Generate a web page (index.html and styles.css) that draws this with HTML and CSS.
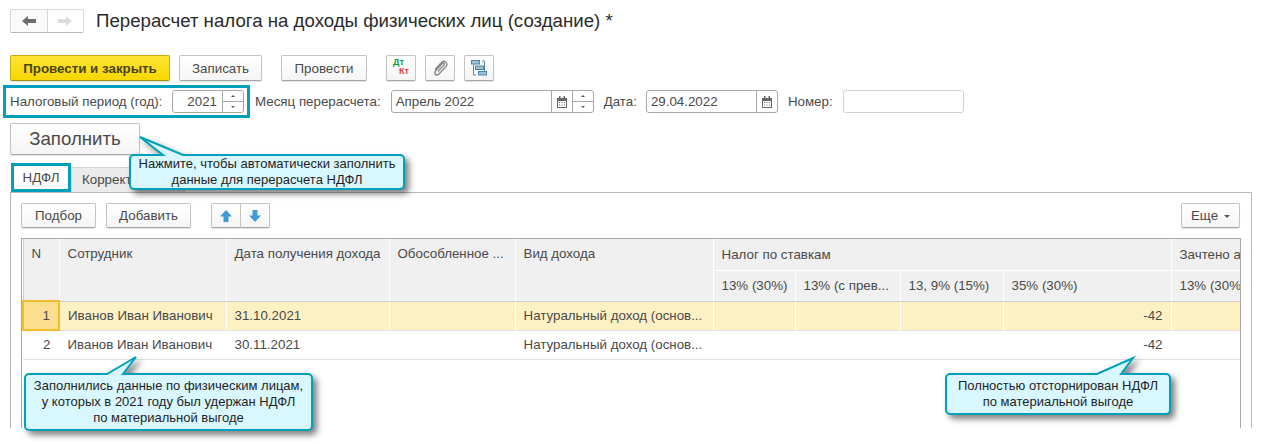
FILE: index.html
```html
<!DOCTYPE html>
<html lang="ru">
<head>
  <meta charset="UTF-8" />
  <title>Перерасчет НДФЛ</title>
  <link rel="stylesheet" href="styles.css">
</head>
<body>
  <div class="page">
    <div class="head">
      <div class="nav">
        <button class="nav-btn">
          <svg width="16" height="12" viewBox="0 0 16 12"><path d="M1 6 7 1v3h8v4H7v3z" fill="#6e6e6e"/></svg>
        </button>
        <button class="nav-btn">
          <svg width="16" height="12" viewBox="0 0 16 12"><path d="M15 6 9 1v3H1v4h8v3z" fill="#dcdcdc"/></svg>
        </button>
      </div>
      <h1>Перерасчет налога на доходы физических лиц (создание) *</h1>
    </div>

    <div class="toolbar">
      <button class="btn btn-main">Провести и закрыть</button>
      <button class="btn btn-write">Записать</button>
      <button class="btn btn-post">Провести</button>
      <button class="btn btn-icon btn-dtkt"><span class="dt">Дт</span><span class="kt">Кт</span></button>
      <button class="btn btn-icon">
        <svg width="17" height="17" viewBox="0 0 17 17" fill="none" stroke="#8a8a8a" stroke-width="1.4"><path d="M6 11.500 12 5C13 3.800 11.500 2.400 10.300 3.600L3.500 11C1.500 13.500 4.500 16.500 7 14L14 6.500C16.500 3.500 12.500-.5 9.500 2.500L3 9.500"/></svg>
      </button>
      <button class="btn btn-icon">
        <svg width="16" height="16" viewBox="0 0 16 16" fill="none" stroke="#4f86ab"><path d="M2.500 4.500V15H5M13.500 11V1H11"/><rect x=".5" y=".5" width="8" height="3.500" fill="#9cc0da"/><rect x="4.500" y="6" width="8" height="3.500" fill="#9cc0da"/><rect x="7.500" y="11.500" width="8" height="3.500" fill="#9cc0da"/></svg>
      </button>
    </div>

    <div class="filters">
      <div class="mark-box period">
        <span class="lbl">Налоговый период (год):</span>
        <div class="field field-year">
          <span class="val val-right">2021</span>
          <span class="spin"><i class="up"></i><i class="down"></i></span>
        </div>
      </div>
      <span class="lbl lbl-month">Месяц перерасчета:</span>
      <div class="field field-month">
        <span class="val">Апрель 2022</span>
        <span class="cal"><svg width="12" height="12" viewBox="0 0 12 12"><path d="M1 2h10v10H1z" fill="#666"/><path d="M3 0h1.500v3H3zM7.500 0H9v3H7.500z" fill="#666"/><path d="M2 5h8v6H2z" fill="#fff"/><path d="M3 6h1v1H3zm2.500 0h1v1h-1zM8 6h1v1H8zM3 8.500h1v1H3zm2.500 0h1v1h-1zm2.500 0h1v1H8z" fill="#666"/></svg></span>
        <span class="spin"><i class="up"></i><i class="down"></i></span>
      </div>
      <span class="lbl lbl-date">Дата:</span>
      <div class="field field-date">
        <span class="val">29.04.2022</span>
        <span class="cal"><svg width="12" height="12" viewBox="0 0 12 12"><path d="M1 2h10v10H1z" fill="#666"/><path d="M3 0h1.500v3H3zM7.500 0H9v3H7.500z" fill="#666"/><path d="M2 5h8v6H2z" fill="#fff"/><path d="M3 6h1v1H3zm2.500 0h1v1h-1zM8 6h1v1H8zM3 8.500h1v1H3zm2.500 0h1v1h-1zm2.500 0h1v1H8z" fill="#666"/></svg></span>
      </div>
      <span class="lbl lbl-num">Номер:</span>
      <div class="field field-num"></div>
    </div>

    <button class="btn btn-fill">Заполнить</button>

    <div class="tabs">
      <div class="tab tab-active">НДФЛ</div>
      <div class="tab">Корректировка</div>
    </div>

    <div class="panel">
      <div class="panel-bar">
        <button class="btn btn-pick">Подбор</button>
        <button class="btn btn-add">Добавить</button>
        <div class="arrows">
          <button class="btn btn-arrow"><svg width="14" height="14" viewBox="0 0 14 14"><path d="M7 1l6 6.500H9.500V13h-5V7.500H1z" fill="#3f9bd8"/></svg></button>
          <button class="btn btn-arrow"><svg width="14" height="14" viewBox="0 0 14 14"><path d="M7 13l6-6.500H9.500V1h-5v5.500H1z" fill="#3f9bd8"/></svg></button>
        </div>
        <button class="btn btn-more">Еще<i class="caret"></i></button>
      </div>

      <div class="table-wrap">
        <table class="grid">
          <colgroup>
            <col class="c-n"><col class="c-emp"><col class="c-date"><col class="c-sep"><col class="c-kind">
            <col class="c-r1"><col class="c-r2"><col class="c-r3"><col class="c-r4"><col class="c-next">
          </colgroup>
          <thead>
            <tr class="row-h1">
              <th rowspan="2">N</th>
              <th rowspan="2">Сотрудник</th>
              <th rowspan="2">Дата получения дохода</th>
              <th rowspan="2">Обособленное ...</th>
              <th rowspan="2">Вид дохода</th>
              <th colspan="4" class="mid">Налог по ставкам</th>
              <th class="mid">Зачтено авансов</th>
            </tr>
            <tr class="row-h2">
              <th class="mid">13% (30%)</th>
              <th class="mid">13% (с прев...</th>
              <th class="mid">13, 9% (15%)</th>
              <th class="mid">35% (30%)</th>
              <th class="mid">13% (30%)</th>
            </tr>
          </thead>
          <tbody>
            <tr class="row-current">
              <td class="num cell-active">1</td>
              <td>Иванов Иван Иванович</td>
              <td>31.10.2021</td>
              <td></td>
              <td>Натуральный доход (основ...</td>
              <td></td><td></td><td></td>
              <td class="num">-42</td>
              <td></td>
            </tr>
            <tr>
              <td class="num">2</td>
              <td>Иванов Иван Иванович</td>
              <td>30.11.2021</td>
              <td></td>
              <td>Натуральный доход (основ...</td>
              <td></td><td></td><td></td>
              <td class="num">-42</td>
              <td></td>
            </tr>
          </tbody>
        </table>
      </div>
    </div>

    <div class="callout callout-fill">
      <svg class="callout-bg" width="276" height="36" viewBox="0 0 276 36"><path d="M5 1H34L11-17 54 1H271a4 4 0 0 1 4 4V31a4 4 0 0 1-4 4H5a4 4 0 0 1-4-4V5a4 4 0 0 1 4-4z"/></svg>
      <p>Нажмите, чтобы автоматически заполнить<br>данные для перерасчета НДФЛ</p>
    </div>
    <div class="callout callout-people">
      <svg class="callout-bg" width="289" height="58" viewBox="0 0 289 58"><path d="M5 1H83L112-16 99 1H284a4 4 0 0 1 4 4V53a4 4 0 0 1-4 4H5a4 4 0 0 1-4-4V5a4 4 0 0 1 4-4z"/></svg>
      <p>Заполнились данные по физическим лицам,<br>у которых в 2021 году был удержан НДФЛ<br>по материальной выгоде</p>
    </div>
    <div class="callout callout-storno">
      <svg class="callout-bg" width="226" height="42" viewBox="0 0 226 42"><path d="M5 1H152L188-15 176 1H221a4 4 0 0 1 4 4V37a4 4 0 0 1-4 4H5a4 4 0 0 1-4-4V5a4 4 0 0 1 4-4z"/></svg>
      <p>Полностью отсторнирован НДФЛ<br>по материальной выгоде</p>
    </div>
  </div>
</body>
</html>
```

FILE: styles.css
```css
* { box-sizing: border-box; }
html, body { margin: 0; background: #fff; }
body {
  width: 1262px;
  height: 444px;
  overflow: hidden;
  font-family: "Liberation Sans", Arial, sans-serif;
  font-size: 10pt;
  color: #4a4a4a;
}
.page { position: relative; height: 444px; padding: 9px 10px 0; }

/* шапка */
.head { display: flex; align-items: center; height: 24px; }
.nav { display: flex; width: 74px; height: 24px; border: 1px solid #d8d8d8; border-bottom-color: #b8b8b8; border-radius: 2px; }
.nav-btn { flex: 1; padding: 0; background: #fafafa; border: 0; display: flex; align-items: center; justify-content: center; }
.nav-btn + .nav-btn { border-left: 1px solid #d8d8d8; background: #fff; }
h1 { margin: 0 0 0 12px; font-size: 14pt; font-weight: normal; color: #2b2b2b; white-space: nowrap; }

/* кнопки */
.btn {
  display: block;
  height: 26px;
  padding: 0;
  font: 10pt "Liberation Sans", Arial, sans-serif;
  color: #4a4a4a;
  background: linear-gradient(#fff, #f5f5f5);
  border: 1px solid #c4c4c4;
  border-bottom-color: #a6a6a6;
  border-radius: 2px;
  box-shadow: 0 1px 1px rgba(0,0,0,.12);
}
.toolbar { display: flex; margin-top: 22px; }
.btn-main { width: 160px; background: linear-gradient(#ffe433, #f7d800); border-color: #c9ac10; border-bottom-color: #a8900c; font-weight: bold; color: #4a4212; }
.btn-write { width: 83px; margin-left: 9px; }
.btn-post { width: 86px; margin-left: 19px; }
.btn-icon { width: 30px; margin-left: 9px; display: flex; align-items: center; justify-content: center; }
.btn-dtkt { margin-left: 19px; position: relative; font-size: 9px; font-weight: bold; line-height: 9px; }
.dt { position: absolute; left: 6px; top: 2px; color: #0a9a3c; }
.kt { position: absolute; left: 12px; top: 11px; color: #e0403c; }

/* реквизиты */
.filters { display: flex; align-items: center; height: 33px; margin-top: 4px; }
.mark-box { border: 3px solid #00a0bc; }
.period { display: flex; align-items: center; width: 247px; height: 33px; margin-left: -7px; padding: 0 3px 0 4px; }
.lbl { white-space: nowrap; }
.period .field { margin-left: auto; }
.field { display: flex; align-items: stretch; height: 23px; background: #fff; border: 1px solid #a8a8a8; border-radius: 3px; }
.val { flex: 1; padding: 0 4px; line-height: 21px; color: #4a4a4a; white-space: nowrap; }
.val-right { text-align: right; padding-right: 5px; }
.spin { display: flex; flex-direction: column; width: 21px; border-left: 1px solid #a8a8a8; }
.spin i { flex: 1; display: flex; align-items: center; justify-content: center; }
.spin i::before { content: ""; border: 2px solid transparent; }
.spin .up { border-bottom: 1px solid #a8a8a8; }
.spin .up::before { border-top: 0; border-bottom: 2px solid #555; }
.spin .down::before { border-bottom: 0; border-top: 2px solid #555; }
.cal { display: flex; align-items: center; justify-content: center; width: 21px; border-left: 1px solid #a8a8a8; }
.field-year { width: 72px; }
.lbl-month { margin-left: 5px; }
.field-month { width: 203px; margin-left: 10px; }
.lbl-date { margin-left: 10px; }
.field-date { width: 132px; margin-left: 9px; }
.lbl-num { margin-left: 10px; }
.field-num { width: 121px; margin-left: 10px; border-color: #d2d2d2; }

.btn-fill { width: 130px; height: 32px; margin-top: 5px; font-size: 14pt; }

/* закладки */
.tabs { display: flex; align-items: flex-end; height: 29px; margin: 8px 0 0 1px; }
.tab { height: 25px; padding: 0 10px; line-height: 24px; background: #ebebeb; border: 1px solid #d4d4d4; border-bottom: 0; white-space: nowrap; }
.tab-active { width: 60px; height: 29px; padding: 0; line-height: 24px; text-align: center; background: #fff; border: 3px solid #00a0bc; }

/* табличная часть */
.panel { width: 1242px; height: 236px; padding: 10px 11px 0 10px; border: 1px solid #b8b8b8; border-bottom: 0; }
.panel-bar { display: flex; height: 25px; }
.panel-bar .btn { height: 25px; }
.btn-pick { width: 75px; }
.btn-add { width: 85px; margin-left: 10px; }
.arrows { display: flex; margin-left: 20px; }
.btn-arrow { width: 30px; display: flex; align-items: center; justify-content: center; }
.btn-arrow + .btn-arrow { margin-left: -1px; }
.btn-more { width: 59px; margin-left: auto; }
.caret { display: inline-block; margin-left: 6px; vertical-align: 2px; border: 3px solid transparent; border-bottom: 0; border-top-color: #555; }

.table-wrap { width: 1220px; height: 190px; margin-top: 10px; overflow: hidden; border: 1px solid #a8a8a8; border-bottom: 0; }
.grid { width: 1300px; table-layout: fixed; border-collapse: collapse; }
.c-n { width: 36px; }
.c-emp { width: 167px; }
.c-date { width: 163px; }
.c-sep { width: 126px; }
.c-kind { width: 198px; }
.c-r1 { width: 82px; }
.c-r2 { width: 105px; }
.c-r3 { width: 103px; }
.c-r4 { width: 168px; }
.c-next { width: 152px; }
.grid th, .grid td { padding: 0 8px; overflow: hidden; white-space: nowrap; font-weight: normal; text-align: left; }
.grid th { vertical-align: top; padding-top: 7px; background: #f0f0f0; border-right: 1px solid #fff; border-left: 1px solid #d0d0d0; border-bottom: 1px solid #d0d0d0; }
.grid th.mid { vertical-align: middle; padding-top: 0; border-bottom: 1px solid #fff; }
.row-h1 { height: 31px; }
.row-h2 { height: 31px; }
.row-h2 th.mid { border-bottom: 1px solid #d0d0d0; }
.grid td { height: 29px; border-bottom: 1px solid #e2e2e2; border-left: 1px solid transparent; }
.row-current td { background: #fdf1c4; border-left-color: #fff; }
.grid td.num { text-align: right; }
.grid .row-current .cell-active { background: #fbdf8f; border: 2px solid #f2bd28; }

/* выноски */
.callout { position: absolute; display: flex; align-items: center; justify-content: center; font-size: 13px; color: #1f1f1f; text-align: center; line-height: 16px; }
.callout p { position: relative; margin: 0; white-space: nowrap; }
.callout-bg { position: absolute; left: 0; top: 0; overflow: visible; filter: drop-shadow(4px 4px 3px rgba(0,0,0,.5)); }
.callout-bg path { fill: #d9f7ff; stroke: #00a0bc; stroke-width: 2; }
.callout-fill { left: 129px; top: 154px; width: 276px; height: 36px; }
.callout-people { left: 24px; top: 373px; width: 289px; height: 58px; }
.callout-storno { left: 945px; top: 373px; width: 226px; height: 42px; }
```
